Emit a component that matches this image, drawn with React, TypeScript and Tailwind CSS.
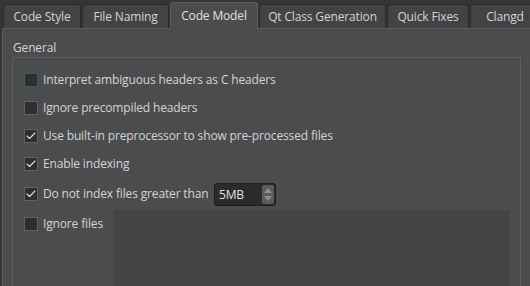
import { Check } from 'lucide-react'

const TABS = [
  { label: 'Code Style', w: 'w-[78px]' },
  { label: 'File Naming', w: 'w-[87px]' },
  { label: 'Code Model', w: 'w-[88px]', active: true },
  { label: 'Qt Class Generation', w: 'w-[127px]' },
  { label: 'Quick Fixes', w: 'w-[82px]' },
  { label: 'Clangd', w: 'w-[70px]' },
]

function Box({ checked, focus }: { checked?: boolean; focus?: boolean }) {
  return (
    <div
      className={`w-[14px] h-[14px] shrink-0 flex items-center justify-center bg-[#2f2f2f] border ${
        focus ? 'border-[#2e6666]' : 'border-[#616161]'
      }`}
    >
      {checked && <Check size={12} strokeWidth={2.2} className="text-[#dcdcdc]" />}
    </div>
  )
}

function Row({ label, checked, focus }: { label: string; checked?: boolean; focus?: boolean }) {
  return (
    <div className="flex items-center gap-[5px] h-[28px]">
      <Box checked={checked} focus={focus} />
      <span>{label}</span>
    </div>
  )
}

export default function App() {
  return (
    <div
      className="w-[530px] h-[286px] overflow-hidden bg-[#353535] text-[12px] tracking-[-0.15px] text-[#d4d4d4] flex flex-col"
      style={{ fontFamily: '"Open Sans", "Noto Sans", sans-serif' }}
    >
      {/* Tab bar */}
      <div className="flex items-end h-[28px] pl-[3px] gap-[1px] shrink-0">
        {TABS.map((t) =>
          t.active ? (
            <div
              key={t.label}
              className={`${t.w} h-[27px] shrink-0 mb-[-1px] relative z-10 flex items-center justify-center bg-[#4b4c4e] border border-b-0 border-[#5c5c5c] rounded-t-[3px] text-[#e0e0e0]`}
            >
              {t.label}
            </div>
          ) : (
            <div
              key={t.label}
              className={`${t.w} h-[24px] shrink-0 flex items-center justify-center bg-[#424345] border border-b-0 border-[#2a2a2a] rounded-t-[3px]`}
            >
              {t.label}
            </div>
          )
        )}
      </div>

      {/* Pane */}
      <div className="flex-1 ml-[2px] bg-[#4b4c4e] border-l border-t border-[#5c5c5c] pt-[10px] pl-[9px] flex flex-col">
        <div className="h-[18px] leading-[18px] ml-[1px]">General</div>
        <div className="flex-1 w-[509px] border-l border-t border-r border-[#5d5e60] pl-[11px] pt-[8px]">
          <Row label="Interpret ambiguous headers as C headers" focus />
          <Row label="Ignore precompiled headers" />
          <Row label="Use built-in preprocessor to show pre-processed files" checked />
          <Row label="Enable indexing" checked />
          <div className="flex items-center gap-[5px] h-[32px]">
            <Box checked />
            <span className="w-[166px] whitespace-nowrap">Do not index files greater than</span>
            <div className="w-[62px] h-[23px] flex bg-[#2b2b2c] border border-[#1c1c1c] rounded-[3px] overflow-hidden">
              <span className="flex-1 pl-[4px] leading-[21px] text-[#e2e2e2]">5MB</span>
              <div className="w-[12px] my-[1px] mr-[1px] bg-[#5a5b5d] rounded-[2px] flex flex-col items-center justify-center gap-[3px]">
                <svg width="8" height="5" viewBox="0 0 8 5">
                  <path d="M0 5 L4 0 L8 5 Z" fill="#8d8e90" />
                </svg>
                <svg width="8" height="5" viewBox="0 0 8 5">
                  <path d="M0 0 L4 5 L8 0 Z" fill="#8d8e90" />
                </svg>
              </div>
            </div>
          </div>
          <div className="flex">
            <div className="w-[89px] shrink-0 pt-[7px] flex items-start gap-[5px]">
              <Box />
              <span className="leading-[14px]">Ignore files</span>
            </div>
            <div className="w-[396px] h-[80px] bg-[#444445]" />
          </div>
        </div>
      </div>
    </div>
  )
}
